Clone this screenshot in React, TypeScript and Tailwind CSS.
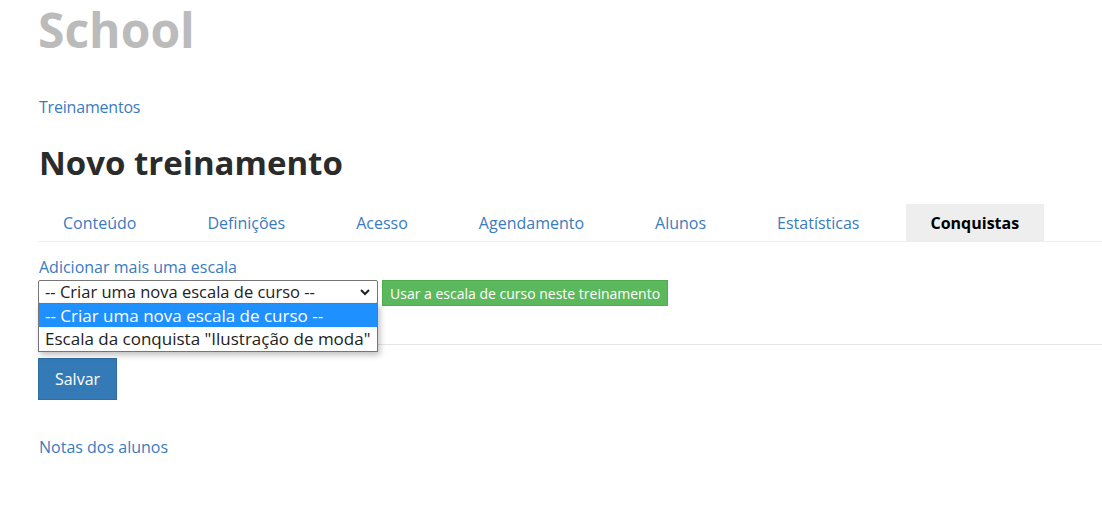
import React from 'react';

const tabs = ['Conteúdo', 'Definições', 'Acesso', 'Agendamento', 'Alunos', 'Estatísticas', 'Conquistas'];

export default function App() {
  return (
    <div className="min-h-[506px] bg-white pl-[38px] text-[#333] font-['Open_Sans','Liberation_Sans',sans-serif]">
      <h1 className="text-[48px] font-bold leading-[60px] text-[#bbbbbb]">School</h1>

      <a href="#" className="mt-[37px] block text-[16px] leading-[20px] text-[#3a7bc0] pl-[1px] tracking-[-0.2px]">Treinamentos</a>

      <h2 className="mt-[26px] text-[33px] font-bold leading-[40px] text-[#2b2b2b] pl-[1px]">Novo treinamento</h2>

      <div className="mt-[21px] flex border-b border-[#eeeeee] gap-[21px]">
        {tabs.map((t) => (
          <div
            key={t}
            className={
              t === 'Conquistas'
                ? 'h-[37px] px-[25px] flex items-center bg-[#eeeeee] text-[16px] font-bold text-black'
                : 'h-[37px] px-[25px] flex items-center text-[16px] text-[#3a7bc0]'
            }
          >
            {t}
          </div>
        ))}
      </div>

      <div className="mt-[15px] text-[16px] leading-[20px] text-[#3a7bc0] pl-[1px]">Adicionar mais uma escala</div>

      <div className="relative mt-[3px] flex items-start gap-[4px]">
        <div className="w-[340px] h-[24px] border border-[#767676] rounded-[2px] flex items-center justify-between pl-[6px] pr-[6px] text-[16.5px] text-[#222]">
          <span>-- Criar uma nova escala de curso --</span>
          <svg width="12" height="12" viewBox="0 0 12 12" fill="none" stroke="#222" strokeWidth="2">
            <path d="M2 4l4 4 4-4" />
          </svg>
        </div>
        <button className="h-[26px] px-[7px] bg-[#5cb85c] border border-[#4cae4c] text-white text-[14px]">
          Usar a escala de curso neste treinamento
        </button>

        <div className="absolute left-0 top-[23px] w-[340px] border border-[#767676] bg-white shadow-[2px_3px_6px_rgba(0,0,0,0.25)] text-[17px] z-10">
          <div className="h-[23px] flex items-center px-[6px] bg-[#1e90ff] text-white">-- Criar uma nova escala de curso --</div>
          <div className="h-[24px] flex items-center px-[6px] text-[#222]">Escala da conquista "Ilustração de moda"</div>
        </div>
      </div>

      <div className="mt-[38px] border-t border-[#e5e5e5]" />

      <button className="mt-[13px] h-[42px] w-[79px] bg-[#337ab7] border border-[#2e6da4] text-white text-[16px]">Salvar</button>

      <a href="#" className="mt-[37px] block text-[16px] leading-[20px] text-[#3a7bc0] pl-[1px]">Notas dos alunos</a>
    </div>
  );
}
